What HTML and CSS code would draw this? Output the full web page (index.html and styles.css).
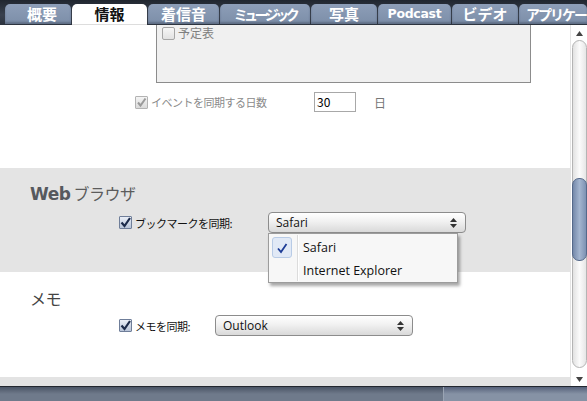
FILE: index.html
```html
<!DOCTYPE html>
<html lang="ja">
<head>
  <meta charset="UTF-8">
  <meta name="viewport" content="width=device-width, initial-scale=1.0">
  <title>情報</title>
  <link rel="stylesheet" href="styles.css">
</head>
<body>
  <div class="window">
    <div class="tabbar">
      <div class="tab t1">概要</div>
      <div class="tab t2 active">情報</div>
      <div class="tab t3">着信音</div>
      <div class="tab t4 narrow">ミュージック</div>
      <div class="tab t5">写真</div>
      <div class="tab t6 latin">Podcast</div>
      <div class="tab t7">ビデオ</div>
      <div class="tab t8">アプリケー</div>
    </div>

    <div class="middle">
      <div class="left">
        <div class="content">
          <div class="box">
            <div class="box-row">
              <span class="cb off"></span>
              <span class="box-label">予定表</span>
            </div>
          </div>

          <div class="row event-row">
            <span class="cb dis">
              <svg width="11" height="11" viewBox="0 0 11 11"><path d="M2 5.5 L4.5 8.5 L9.5 1.5" fill="none" stroke="#9a9a9a" stroke-width="2"/></svg>
            </span>
            <span class="lbl event-lbl">イベントを同期する日数</span>
            <span class="num">30</span>
            <span class="unit">日</span>
          </div>

          <div class="section gray">
            <h2 class="sec-title"><b>Web</b> ブラウザ</h2>
            <div class="row">
              <span class="cb on">
                <svg width="11" height="11" viewBox="0 0 11 11"><path d="M1.5 5.5 L4.5 9 L10 1" fill="none" stroke="#1b2a4a" stroke-width="2.2"/></svg>
              </span>
              <span class="lbl sync-lbl">ブックマークを同期:</span>
              <div class="select wide">
                <span>Safari</span>
                <svg class="arrows" width="7" height="10" viewBox="0 0 7 10"><path d="M3.5 0 L7 4 L0 4 Z M0 6 L7 6 L3.5 10 Z" fill="#333"/></svg>
                <div class="menu">
                  <div class="menu-sep"></div>
                  <div class="item">
                    <span class="tick">
                      <svg width="12" height="12" viewBox="0 0 12 12"><path d="M2 6.5 L5 10 L10.5 2" fill="none" stroke="#1d3c96" stroke-width="1.8"/></svg>
                    </span>
                    <span>Safari</span>
                  </div>
                  <div class="item">
                    <span class="tick blank"></span>
                    <span>Internet Explorer</span>
                  </div>
                </div>
              </div>
            </div>
          </div>

          <div class="section">
            <h2 class="sec-title light">メモ</h2>
            <div class="row">
              <span class="cb on">
                <svg width="11" height="11" viewBox="0 0 11 11"><path d="M1.5 5.5 L4.5 9 L10 1" fill="none" stroke="#1b2a4a" stroke-width="2.2"/></svg>
              </span>
              <span class="lbl memo-lbl">メモを同期:</span>
              <div class="select">
                <span>Outlook</span>
                <svg class="arrows" width="7" height="10" viewBox="0 0 7 10"><path d="M3.5 0 L7 4 L0 4 Z M0 6 L7 6 L3.5 10 Z" fill="#333"/></svg>
              </div>
            </div>
          </div>
        </div>
        <div class="strip"></div>
      </div>

      <div class="scrollbar">
        <div class="arrow">
          <svg width="7" height="5" viewBox="0 0 7 5"><path d="M3.5 0 L7 5 L0 5 Z" fill="#444"/></svg>
        </div>
        <div class="track">
          <div class="thumb"></div>
        </div>
        <div class="arrow">
          <svg width="7" height="5" viewBox="0 0 7 5"><path d="M0 0 L7 0 L3.5 5 Z" fill="#444"/></svg>
        </div>
      </div>
    </div>

    <div class="footer">
      <div class="foot-left"></div>
      <div class="foot-right"></div>
    </div>
  </div>
</body>
</html>
```

FILE: styles.css
```css
body {
  margin: 0;
  font-family: "Noto Sans CJK JP", "DejaVu Sans", sans-serif;
  background: #fff;
}
.window {
  width: 587px;
  height: 401px;
  display: flex;
  flex-direction: column;
  overflow: hidden;
}

/* tabs */
.tabbar {
  height: 25px;
  flex: none;
  display: flex;
  align-items: flex-end;
  padding-left: 5px;
  background: linear-gradient(#20262f, #39414e 60%, #2c333e);
  box-sizing: border-box;
  padding-bottom: 1px;
  overflow: hidden;
  white-space: nowrap;
}
.tab {
  height: 20px;
  margin-right: 1px;
  border-radius: 5px 5px 0 0;
  background: linear-gradient(#8d9eb8, #7c8ea8);
  color: #fff;
  font-weight: bold;
  font-size: 15px;
  line-height: 20px;
  text-align: center;
  flex: none;
  box-shadow: inset 0 -2px 2px rgba(40, 50, 70, 0.35);
}
.tab.active {
  background: #fff;
  color: #111;
  height: 21px;
  margin-bottom: -1px;
  box-shadow: none;
  border-bottom: 1px solid #ddd;
  box-sizing: border-box;
}
.t1 { width: 66px; padding-left: 8px; box-sizing: border-box; }
.t2 { width: 75px; }
.t3 { width: 71px; }
.t4 { width: 90px; }
.t5 { width: 66px; }
.t6 { width: 73px; }
.t7 { width: 66px; }
.t8 {
  width: 68px;
  text-align: left;
  padding-left: 7px;
  font-size: 14px;
  letter-spacing: -2px;
  box-sizing: border-box;
}
.narrow { letter-spacing: -3.5px; font-size: 14px; }
.latin {
  font-family: "DejaVu Sans", sans-serif;
  font-size: 12.5px;
  letter-spacing: -0.3px;
}

/* middle area */
.middle {
  display: flex;
  flex: none;
  height: 361px;
}
.left {
  width: 571px;
  display: flex;
  flex-direction: column;
}
.content {
  height: 352px;
  overflow: hidden;
  position: relative;
}
.strip {
  height: 9px;
  background: #e3e3e3;
}

.box {
  margin-left: 156px;
  width: 373px;
  height: 57px;
  border: 1px solid #8c8c8c;
  border-top: none;
  background: #f0f0f0;
  overflow: hidden;
}
.box-row {
  display: flex;
  align-items: center;
  padding-left: 5px;
  padding-top: 1px;
  height: 14px;
}
.box-label {
  font-size: 12px;
  color: #808080;
  margin-left: 3px;
  line-height: 14px;
}

.row {
  display: flex;
  align-items: center;
  height: 21px;
  padding-left: 119px;
  font-size: 11px;
}
.event-row {
  margin-top: 9px;
  height: 20px;
  padding-left: 135px;
}
.lbl {
  margin-left: 3px;
  letter-spacing: -0.5px;
  color: #111;
}
.event-lbl {
  width: 163px;
  color: #8a8a8a;
}
.sync-lbl { width: 133px; }
.memo-lbl { width: 80px; }

.num {
  width: 42px;
  height: 20px;
  border: 1px solid #a8a8a8;
  box-sizing: border-box;
  font-size: 12px;
  line-height: 18px;
  padding-left: 2px;
  background: #fff;
  color: #000;
}
.unit {
  margin-left: 18px;
  font-size: 12px;
  color: #777;
}

/* checkboxes */
.cb {
  width: 13px;
  height: 13px;
  box-sizing: border-box;
  border: 1px solid #6f7e99;
  background: linear-gradient(#e9eef7, #b8c4d8);
  display: flex;
  align-items: center;
  justify-content: center;
  flex: none;
  border-radius: 1px;
}
.cb.off {
  border-color: #a6a6a6;
  background: linear-gradient(#f6f6f6, #e2e2e2);
  border-radius: 2px;
}
.cb.dis {
  border-color: #b3b3b3;
  background: linear-gradient(#f4f4f4, #dadada);
}

/* sections */
.section {
  height: 104px;
  padding-left: 30px;
  box-sizing: border-box;
}
.section.gray {
  margin-top: 56px;
  background: #e4e4e4;
  padding-top: 13px;
}
.section:last-child {
  padding-top: 14px;
}
.sec-title {
  margin: 0;
  height: 24px;
  line-height: 24px;
  font-size: 16px;
  font-weight: normal;
  color: #5c5c5c;
  letter-spacing: -0.5px;
}
.sec-title b {
  font-family: "DejaVu Sans", sans-serif;
  font-size: 17px;
  color: #56595e;
  letter-spacing: -0.5px;
}
.section .row {
  margin-top: 7px;
  padding-left: 89px;
}
.section:last-child .row {
  margin-top: 5px;
}
.sec-title.light {
  font-size: 16px;
  color: #444;
}

/* selects */
.select {
  position: relative;
  width: 198px;
  height: 21px;
  box-sizing: border-box;
  border: 1px solid #8c8c8c;
  border-radius: 4px;
  background: linear-gradient(#ffffff, #f1f1f1 45%, #d9d9d9);
  display: flex;
  align-items: center;
  justify-content: space-between;
  padding: 0 8px 0 7px;
  font-family: "Open Sans", "DejaVu Sans", sans-serif;
  font-size: 12px;
  color: #111;
}
.menu {
  position: absolute;
  top: 20px;
  left: -1px;
  width: 190px;
  height: 50px;
  box-sizing: border-box;
  border: 1px solid #9c9c9c;
  background: #f7f7f7;
  box-shadow: 2px 3px 3px rgba(0, 0, 0, 0.35);
  padding-top: 2px;
  z-index: 2;
}
.menu-sep {
  position: absolute;
  left: 28px;
  top: 1px;
  bottom: 1px;
  width: 1px;
  background: #dcdcdc;
  border-right: 1px solid #fff;
}
.item {
  display: flex;
  align-items: center;
  height: 23px;
  font-size: 12.5px;
  color: #111;
}
.tick {
  width: 20px;
  height: 21px;
  margin-left: 3px;
  margin-right: 11px;
  box-sizing: border-box;
  border: 1px solid #b8cbe6;
  border-radius: 3px;
  background: #e1e9f6;
  display: flex;
  align-items: center;
  justify-content: center;
}
.tick.blank {
  border-color: transparent;
  background: none;
}

/* scrollbar */
.scrollbar {
  width: 16px;
  border-left: 1px solid #e4e4e4;
  background: #fff;
  display: flex;
  flex-direction: column;
  align-items: center;
}
.arrow {
  height: 14px;
  display: flex;
  align-items: center;
  justify-content: center;
  flex: none;
}
.scrollbar .arrow:first-child {
  margin-top: 1px;
}
.track {
  flex: 1;
  width: 15px;
  margin: 0 0 4px;
  box-sizing: border-box;
  border: 1px solid #b4b4b4;
  border-radius: 8px;
  background: linear-gradient(90deg, #e2e2e2, #fbfbfb 50%, #e6e6e6);
  padding-top: 137px;
}
.thumb {
  height: 83px;
  margin: 0 -1px;
  box-sizing: border-box;
  border: 1px solid #55698a;
  border-radius: 7px;
  background: linear-gradient(90deg, #7589aa, #a3b5cf 50%, #7d92b3);
}

/* footer */
.footer {
  flex: 1;
  display: flex;
  border-top: 1px solid #22272f;
}
.foot-left {
  width: 443px;
  background: linear-gradient(#4a5465, #6f7a8b 50%, #6f7a8b);
}
.foot-right {
  flex: 1;
  border-left: 1px solid #9aa4b3;
  background: linear-gradient(#56617a, #8692a5 50%, #8692a5);
}
```
